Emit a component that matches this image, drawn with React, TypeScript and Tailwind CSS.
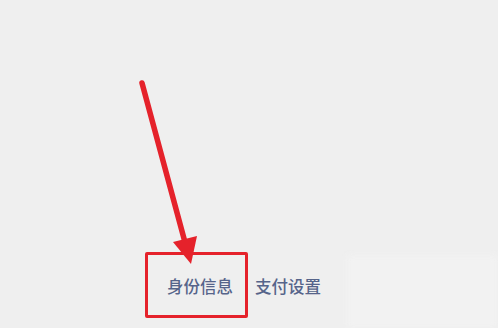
import React from 'react';

const tabs = ['身份信息', '支付设置'];

export default function App() {
  return (
    <div
      className="relative flex h-[328px] w-full flex-col justify-end overflow-hidden bg-[#efefef]"
      style={{ fontFamily: '"Noto Sans CJK SC", "Noto Sans", sans-serif' }}
    >
      {/* tab row */}
      <div className="mb-[12px] flex h-[60px] items-stretch">
        <div className="flex items-center gap-[22px] pl-[167px] pr-[14px]">
          {tabs.map((t) => (
            <span key={t} className="text-[16.5px] leading-none font-medium text-[#56648a]">
              {t}
            </span>
          ))}
        </div>
        <div className="-mb-[12px] ml-[12px] flex-1 bg-[#f2f2f2] blur-[3px]" />
      </div>

      {/* annotation: red frame */}
      <div className="absolute left-[145px] top-[252px] h-[66px] w-[103px] rounded-[2px] border-[3px] border-[#e5222b]" />

      {/* annotation: arrow */}
      <svg className="pointer-events-none absolute left-0 top-0" width="498" height="328" viewBox="0 0 498 328">
        <line x1="142" y1="83" x2="186" y2="246" stroke="#e5222b" strokeWidth="5.5" strokeLinecap="round" />
        <polygon points="173,242 197,236 191,264" fill="#e5222b" />
      </svg>
    </div>
  );
}
